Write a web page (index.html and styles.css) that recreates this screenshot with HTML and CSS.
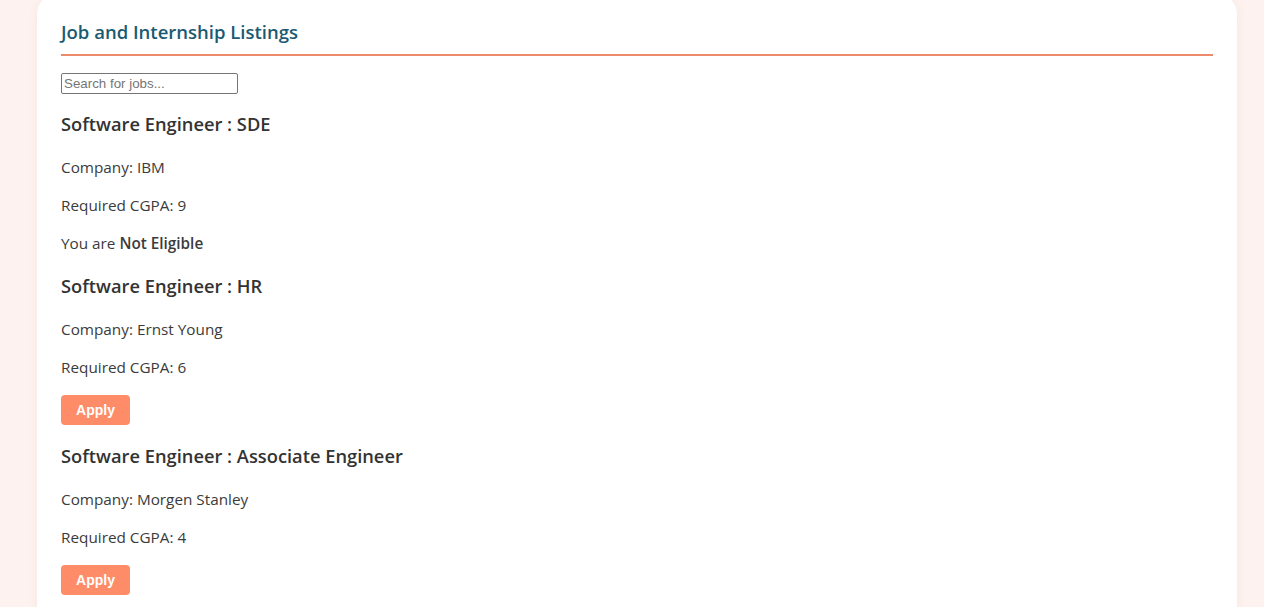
FILE: index.html
```html
<!DOCTYPE html>
<html>
<head>
<meta charset="utf-8">
<link rel="stylesheet" href="styles.css">
</head>
<body>
<div class="page">
  <section class="card">
    <h2 class="title">Job and Internship Listings</h2>
    <input class="search" type="text" placeholder="Search for jobs...">
    <div class="job">
      <h3 class="job-title">Software Engineer : SDE</h3>
      <p class="line">Company: IBM</p>
      <p class="line">Required CGPA: 9</p>
      <p class="line">You are <strong>Not Eligible</strong></p>
    </div>
    <div class="job">
      <h3 class="job-title">Software Engineer : HR</h3>
      <p class="line">Company: Ernst Young</p>
      <p class="line">Required CGPA: 6</p>
      <button class="apply">Apply</button>
    </div>
    <div class="job">
      <h3 class="job-title">Software Engineer : Associate Engineer</h3>
      <p class="line">Company: Morgen Stanley</p>
      <p class="line">Required CGPA: 4</p>
      <button class="apply">Apply</button>
    </div>
  </section>
</div>
</body>
</html>
```
FILE: styles.css
```css
html, body {
  margin: 0;
  padding: 0;
  background: #fdf2ef;
  height: 100%;
  overflow: hidden;
}
.page {
  padding-left: 37px;
}
.card {
  width: 1200px;
  box-sizing: border-box;
  margin-top: -6px;
  background: #ffffff;
  border-radius: 20px;
  padding: 25px 24px 40px 24px;
  box-shadow: 0 2px 10px rgba(200, 150, 140, 0.12);
  font-family: "Open Sans", "Noto Sans", sans-serif;
  color: #3b3b3b;
}
.title {
  margin: 0;
  font-size: 18.5px;
  font-weight: 600;
  color: #1a5a72;
  line-height: 26px;
  padding-bottom: 9px;
  border-bottom: 2px solid #ee8a6c;
}
.search {
  display: block;
  margin-top: 17px;
  margin-bottom: -1px;
  width: 177px;
  height: 21px;
  box-sizing: border-box;
  padding: 1px 2px;
  border: 1px solid #767676;
  border-radius: 2px;
  font-family: "Liberation Sans", Arial, sans-serif;
  font-size: 13.33px;
}
.search::placeholder {
  color: #757575;
}
.job-title {
  margin: 18px 0 19px 0;
  font-size: 18.3px;
  line-height: 26px;
  font-weight: 600;
  color: #333333;
}
.line {
  margin: 16px 0;
  font-size: 15.3px;
  line-height: 22px;
}
.line:last-child {
  margin-bottom: 19px;
}
.line strong {
  font-weight: 600;
}
.apply {
  display: block;
  width: 69px;
  height: 30px;
  margin: 17px 0 0 0;
  border: none;
  border-radius: 4px;
  background: #ff8c69;
  color: #ffffff;
  font-family: "Liberation Sans", Arial, sans-serif;
  font-weight: 700;
  font-size: 14px;
  cursor: pointer;
}
```
